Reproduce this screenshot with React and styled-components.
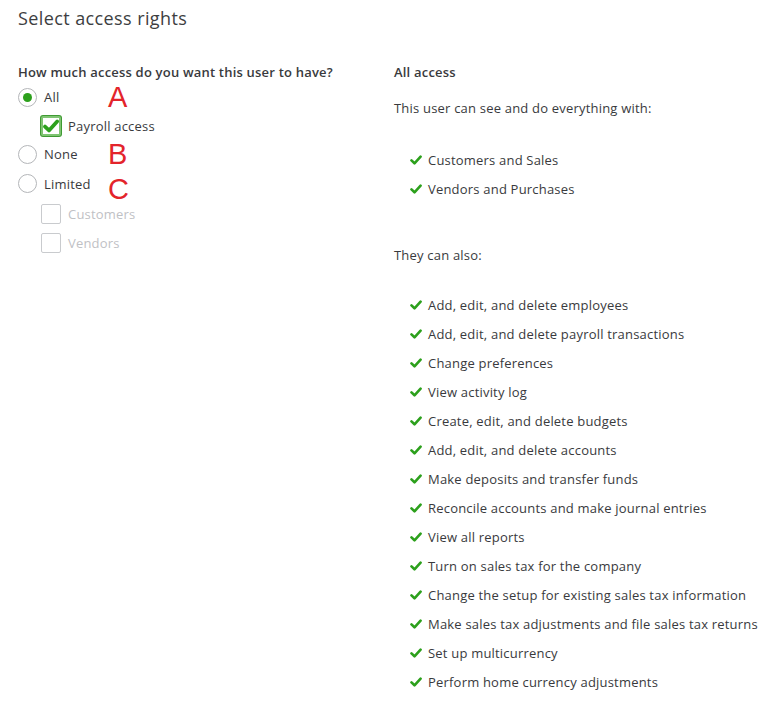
import React from "react";
import styled, { createGlobalStyle } from "styled-components";

const GlobalStyle = createGlobalStyle`
  body {
    margin: 0;
    background: #ffffff;
    font-family: "Open Sans", "Noto Sans", sans-serif;
    color: #393a3d;
  }
`;

const Page = styled.div`
  width: 774px;
  height: 712px;
  padding: 6px 0 0 18px;
  box-sizing: border-box;
  overflow: hidden;
`;

const Title = styled.h1`
  margin: 0;
  font-size: 18px;
  font-weight: 400;
  letter-spacing: 0.4px;
  line-height: 24px;
  color: #3d3e41;
`;

const Columns = styled.div`
  display: grid;
  grid-template-columns: 376px 1fr;
  margin-top: 33px;
`;

const Heading = styled.div`
  font-size: 13px;
  font-weight: 600;
  letter-spacing: 0.2px;
  line-height: 18px;
  color: #393a3d;
`;

const Options = styled.div`
  display: flex;
  flex-direction: column;
  margin-top: 2px;
`;

const OptionRow = styled.label`
  position: relative;
  display: flex;
  align-items: center;
  gap: 7px;
  height: ${(p) => p.$h || 30}px;
  padding-left: ${(p) => (p.$indent ? 23 : 0)}px;
  font-size: 13px;
  letter-spacing: 0.2px;
  color: ${(p) => (p.$disabled ? "#bfc1c5" : "#393a3d")};
`;

const Radio = styled.span`
  width: 19px;
  height: 19px;
  border-radius: 50%;
  border: 1px solid #b4b6b9;
  box-sizing: border-box;
  display: flex;
  align-items: center;
  justify-content: center;
  background: #fff;
  &::after {
    content: "";
    width: 9px;
    height: 9px;
    border-radius: 50%;
    background: ${(p) => (p.$checked ? "#2ca01c" : "transparent")};
  }
`;

const Box = styled.span`
  width: 20px;
  height: 20px;
  box-sizing: border-box;
  border: ${(p) => (p.$checked ? "2px solid #7fc472" : "1px solid #c9cbce")};
  border-radius: 2px;
  display: flex;
  align-items: center;
  justify-content: center;
  background: #fff;
  box-shadow: ${(p) => (p.$checked ? "0 0 0 1px #3f9a33" : "none")};
`;

const Marker = styled.span`
  position: absolute;
  left: 90px;
  top: 50%;
  transform: translateY(-50%);
  margin-top: ${(p) => p.$dy || 0}px;
  font-family: "Liberation Sans", sans-serif;
  font-size: 29px;
  letter-spacing: 0;
  color: #e3242b;
  line-height: 1;
`;

const Text = styled.p`
  margin: ${(p) => p.$mt || 0}px 0 0;
  font-size: 13px;
  letter-spacing: 0.2px;
  line-height: 18px;
  color: #393a3d;
`;

const List = styled.ul`
  list-style: none;
  margin: ${(p) => p.$mt}px 0 0;
  padding: 0 0 0 16px;
  display: flex;
  flex-direction: column;
  gap: 11px;
`;

const Item = styled.li`
  display: flex;
  align-items: center;
  gap: 6px;
  font-size: 13px;
  letter-spacing: 0.2px;
  line-height: 18px;
  color: #393a3d;
`;

const Tick = ({ size = 12, color = "#2ca01c", stroke = 2.6 }) => (
  <svg width={size} height={size} viewBox="0 0 12 12">
    <path d="M1.5 6.4 L4.5 9.3 L10.6 2.6" fill="none" stroke={color} strokeWidth={stroke} strokeLinecap="round" strokeLinejoin="round" />
  </svg>
);

const withItems = ["Customers and Sales", "Vendors and Purchases"];

const alsoItems = [
  "Add, edit, and delete employees",
  "Add, edit, and delete payroll transactions",
  "Change preferences",
  "View activity log",
  "Create, edit, and delete budgets",
  "Add, edit, and delete accounts",
  "Make deposits and transfer funds",
  "Reconcile accounts and make journal entries",
  "View all reports",
  "Turn on sales tax for the company",
  "Change the setup for existing sales tax information",
  "Make sales tax adjustments and file sales tax returns",
  "Set up multicurrency",
  "Perform home currency adjustments",
];

export default function App() {
  return (
    <>
      <GlobalStyle />
      <Page>
        <Title>Select access rights</Title>
        <Columns>
          <div>
            <Heading>How much access do you want this user to have?</Heading>
            <Options>
              <OptionRow $h={28}>
                <Radio $checked />
                All
                <Marker>A</Marker>
              </OptionRow>
              <OptionRow $indent $h={29}>
                <Box $checked>
                  <Tick size={16} color="#2ca01c" stroke={2.8} />
                </Box>
                Payroll access
              </OptionRow>
              <OptionRow $h={28}>
                <Radio />
                None
                <Marker>B</Marker>
              </OptionRow>
              <OptionRow $h={31}>
                <Radio />
                Limited
                <Marker $dy={5}>C</Marker>
              </OptionRow>
              <OptionRow $indent $disabled $h={30}>
                <Box />
                Customers
              </OptionRow>
              <OptionRow $indent $disabled $h={28}>
                <Box />
                Vendors
              </OptionRow>
            </Options>
          </div>
          <div>
            <Heading>All access</Heading>
            <Text $mt={18}>This user can see and do everything with:</Text>
            <List $mt={34}>
              {withItems.map((t) => (
                <Item key={t}>
                  <Tick />
                  {t}
                </Item>
              ))}
            </List>
            <Text $mt={48}>They can also:</Text>
            <List $mt={32}>
              {alsoItems.map((t) => (
                <Item key={t}>
                  <Tick />
                  {t}
                </Item>
              ))}
            </List>
          </div>
        </Columns>
      </Page>
    </>
  );
}
